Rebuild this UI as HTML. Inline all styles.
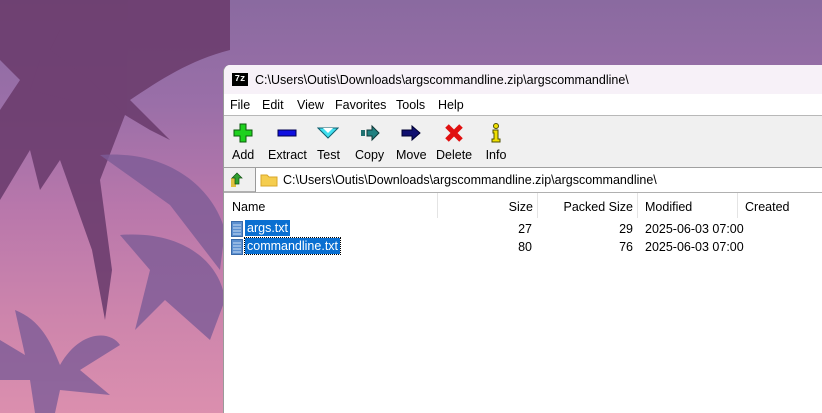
<!DOCTYPE html>
<html><head><style>
*{margin:0;padding:0;box-sizing:border-box}
body{width:822px;height:413px;overflow:hidden;position:relative;font-family:"Liberation Sans",sans-serif;font-size:12px;color:#000;background:linear-gradient(180deg,#8a6aa0 0%,#9a6fa8 25%,#b877ab 50%,#cc84ac 75%,#db8fae 100%)}
#win{position:absolute;left:223px;top:65px;width:599px;height:348px;background:#fff;border-left:1px solid #9a9a9a;border-top-left-radius:7px;overflow:hidden}
.title{height:29px;background:#f7f1f8;display:flex;align-items:center;padding-left:8px;font-size:12.5px}
.logo{width:16px;height:13px;border:1px solid #000;background:#000;color:#fff;font-size:9px;font-weight:bold;line-height:11px;text-align:center;margin-right:7px;font-family:"Liberation Mono",monospace}
.menu{height:22px;position:relative;border-bottom:1px solid #b8b8b8;font-size:12.5px}
.menu span{position:absolute;top:4px}
.tb{height:52px;background:#f0f0f0;position:relative;border-bottom:1px solid #a0a0a0;font-size:12.5px}
.btn{position:absolute;top:6px;display:flex;flex-direction:column;align-items:center}
.btn svg{width:22px;height:22px;margin-bottom:4px}
.addr{height:25px;display:flex;align-items:center;border-bottom:2px solid #b0b0b0;background:#f0f0f0;font-size:12.5px}
.addr .in{flex:1;height:24px;background:#fff;border-left:1px solid #9a9a9a;display:flex;align-items:center;margin-left:10px;padding-left:4px}
.hdr{height:27px;position:relative;font-size:12.5px}
.hdr div,.row div{position:absolute;top:7px}
.sep{position:absolute;top:0;width:1px;height:25px;background:#e4e4e4}
.row{height:18px;position:relative;font-size:12.5px}
.row div{top:2px}
.sel{background:#0a6fd1;color:#fff;padding:1px 2px}
</style></head><body>
<svg width="230" height="413" style="position:absolute;left:0;top:0">
<g fill="#6c3d6e" opacity=".9">
<path d="M0 0H230V50C190 60 160 80 130 100L170 140L150 130L125 115L100 180L112 270L105 320L92 250L60 160L40 190L30 150L0 200V110L20 80L0 60Z"/>
<path d="M100 100L40 60L30 90L70 100Z"/>
<path d="M120 110L60 30L50 50L90 80Z"/>
</g>
<g fill="#7d5c97" opacity=".8">
<path d="M100 155C160 150 210 180 225 230L220 270L170 205Z"/>
<path d="M120 235C180 230 220 260 225 300L210 340L165 300L135 330L150 270Z"/>
<path d="M15 310C40 320 50 340 60 365C80 330 110 330 120 345L80 370L110 395L60 390L55 413H35L30 380L0 380V340L25 355Z"/>
</g>
</svg>
<div id="win">
<div class="title"><div class="logo">7z</div>C:\Users\Outis\Downloads\argscommandline.zip\argscommandline\</div>
<div class="menu"><span style="left:6px">File</span><span style="left:38px">Edit</span><span style="left:73px">View</span><span style="left:111px">Favorites</span><span style="left:172px">Tools</span><span style="left:214px">Help</span></div>
<div class="tb">
<div class="btn" style="left:8px"><svg viewBox="0 0 22 22"><path d="M8 2h6v6h6v6h-6v6H8v-6H2V8h6z" fill="#1ed11e" stroke="#0a5a0a"/></svg>Add</div>
<div class="btn" style="left:44px"><svg viewBox="0 0 22 22"><rect x="2" y="8" width="18" height="6" fill="#1010e0" stroke="#000050"/></svg>Extract</div>
<div class="btn" style="left:93px"><svg viewBox="0 0 22 22"><path d="M1 6h20L11 16z" fill="#40e0f0" stroke="#106070"/><path d="M6 6l5 5 5-5" fill="#fff"/></svg>Test</div>
<div class="btn" style="left:131px"><svg viewBox="0 0 22 22"><rect x="2" y="8" width="4" height="6" fill="#207070"/><path d="M8 8h5V4l7 7-7 7v-4H8z" fill="#208080" stroke="#103838"/></svg>Copy</div>
<div class="btn" style="left:172px"><svg viewBox="0 0 22 22"><path d="M2 8h10V4l8 7-8 7v-4H2z" fill="#101070" stroke="#000030"/></svg>Move</div>
<div class="btn" style="left:212px"><svg viewBox="0 0 22 22"><path d="M4 4l14 14M18 4L4 18" stroke="#e01010" stroke-width="5"/></svg>Delete</div>
<div class="btn" style="left:261px"><svg viewBox="0 0 22 22"><circle cx="11" cy="4" r="2.5" fill="#f0e000" stroke="#505000"/><path d="M8 8h5v9h2v3H7v-3h2v-6H8z" fill="#f0e000" stroke="#505000"/></svg>Info</div>
</div>
<div class="addr"><svg width="16" height="16" style="margin-left:5px" viewBox="0 0 16 16"><path d="M2 6h5v9H2z" fill="#e0c040"/><path d="M6 12V6H3l5-5 5 5h-3v6z" fill="#30a030" stroke="#105010" stroke-width=".7"/></svg><div class="in"><svg width="18" height="14" viewBox="0 0 18 14" style="margin-right:5px"><path d="M1 2h6l2 2h8v9H1z" fill="#f5cd4e" stroke="#d9a72a"/></svg>C:\Users\Outis\Downloads\argscommandline.zip\argscommandline\</div></div>
<div class="hdr">
<div style="left:8px">Name</div><span class="sep" style="left:213px"></span>
<div style="right:289px">Size</div><span class="sep" style="left:313px"></span>
<div style="right:189px">Packed Size</div><span class="sep" style="left:413px"></span>
<div style="left:421px">Modified</div><span class="sep" style="left:513px"></span>
<div style="left:521px">Created</div>
</div>
<div class="row"><svg width="12" height="16" style="position:absolute;left:7px;top:1px" viewBox="0 0 12 16"><rect x=".5" y=".5" width="11" height="15" fill="#5b8fd0" stroke="#3a6aa8"/><path d="M2 4h8M2 7h8M2 10h8M2 13h8" stroke="#c8dcf4"/></svg><div style="left:21px;top:0" class="sel">args.txt</div><div style="right:290px">27</div><div style="right:189px">29</div><div style="left:421px">2025-06-03 07:00</div></div>
<div class="row"><svg width="12" height="16" style="position:absolute;left:7px;top:1px" viewBox="0 0 12 16"><rect x=".5" y=".5" width="11" height="15" fill="#5b8fd0" stroke="#3a6aa8"/><path d="M2 4h8M2 7h8M2 10h8M2 13h8" stroke="#c8dcf4"/></svg><div style="left:21px;top:0;outline:1px dotted #000" class="sel">commandline.txt</div><div style="right:290px">80</div><div style="right:189px">76</div><div style="left:421px">2025-06-03 07:00</div></div>
</div>
</body></html>
